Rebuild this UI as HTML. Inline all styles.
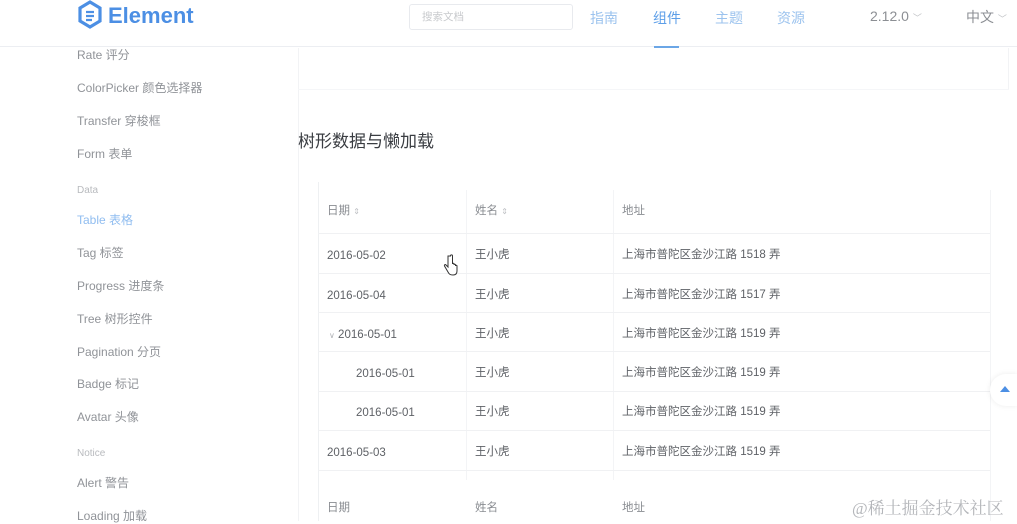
<!DOCTYPE html>
<html><head><meta charset="utf-8">
<style>
*{margin:0;padding:0;box-sizing:border-box}
body{width:1017px;height:521px;overflow:hidden;background:#fff;font-family:"Liberation Sans","Noto Sans CJK SC",sans-serif;position:relative}
.a{position:absolute;white-space:nowrap}
.hdr{position:absolute;left:0;top:0;width:1017px;height:47px;border-bottom:1px solid #eceef2;background:#fff}
.side{font-size:12px;color:#909398}
.grp{font-size:10px;color:#b8babe}
.nav{font-size:14px;color:#9cc3ee;top:8px}
.td{font-size:11.5px;color:#5e6166}
.dt{font-size:11.5px;color:#5e6166;font-family:"Liberation Sans",sans-serif}
.th{font-size:11.5px;color:#8a8d92}
.hl{position:absolute;left:318px;width:672px;height:1px;background:#f0f1f3}
.vl{position:absolute;width:1px;background:#f3f4f6}
</style></head><body>
<div class="hdr"></div>
<svg class="a" style="left:77px;top:0" width="26" height="30" viewBox="0 0 26 30"><path d="M13 2 L23 8 V21 L13 27 L3 21 V8 Z" fill="none" stroke="#4c8fe4" stroke-width="3.2"/><path d="M9 12 H17 M9 16 H17 M9 20 H15" stroke="#4c8fe4" stroke-width="2.2"/></svg>
<div class="a" style="left:108px;top:3px;font-size:22px;font-weight:bold;color:#4c8fe4">Element</div>
<div class="a" style="left:409px;top:4px;width:164px;height:26px;border:1px solid #e8eaee;border-radius:3px"></div>
<div class="a" style="left:422px;top:9px;font-size:10.5px;color:#c8cacd">搜索文档</div>
<div class="a nav" style="left:590px">指南</div>
<div class="a nav" style="left:653px;color:#5c9ee8">组件</div>
<div class="a" style="left:654px;top:46px;width:25px;height:2px;background:#6ba6e6"></div>
<div class="a nav" style="left:715px">主题</div>
<div class="a nav" style="left:777px">资源</div>
<div class="a" style="left:870px;top:8px;font-size:14px;color:#8c8f94">2.12.0 <span style="font-size:9px;color:#c0c2c6">﹀</span></div>
<div class="a" style="left:966px;top:7px;font-size:14px;color:#8c8f94">中文 <span style="font-size:9px;color:#c0c2c6">﹀</span></div>

<div class="a" style="left:298px;top:48px;width:1px;height:473px;background:#f2f3f5"></div>
<div class="a" style="left:1008px;top:48px;width:1px;height:42px;background:#f2f3f5"></div>
<div class="a" style="left:298px;top:89px;width:711px;height:1px;background:#f5f6f8"></div>

<div class="a side" style="left:77px;top:46px">Rate 评分</div>
<div class="a side" style="left:77px;top:79px">ColorPicker 颜色选择器</div>
<div class="a side" style="left:77px;top:112px">Transfer 穿梭框</div>
<div class="a side" style="left:77px;top:145px">Form 表单</div>
<div class="a grp" style="left:77px;top:185px">Data</div>
<div class="a side" style="left:77px;top:211px;color:#90bdf0">Table 表格</div>
<div class="a side" style="left:77px;top:244px">Tag 标签</div>
<div class="a side" style="left:77px;top:277px">Progress 进度条</div>
<div class="a side" style="left:77px;top:310px">Tree 树形控件</div>
<div class="a side" style="left:77px;top:343px">Pagination 分页</div>
<div class="a side" style="left:77px;top:375px">Badge 标记</div>
<div class="a side" style="left:77px;top:408px">Avatar 头像</div>
<div class="a grp" style="left:77px;top:448px">Notice</div>
<div class="a side" style="left:77px;top:474px">Alert 警告</div>
<div class="a side" style="left:77px;top:507px">Loading 加载</div>

<div class="a" style="left:298px;top:127px;font-size:17px;color:#3a3d42">树形数据与懒加载</div>

<div class="a" style="left:318px;top:182px;width:1px;height:339px;background:#eef0f2"></div>
<div class="a" style="left:990px;top:190px;width:1px;height:331px;background:#f3f4f6"></div>
<div class="vl" style="left:466px;top:190px;height:290px"></div>
<div class="vl" style="left:613px;top:190px;height:290px"></div>
<div class="hl" style="top:233px"></div>
<div class="hl" style="top:273px"></div>
<div class="hl" style="top:312px"></div>
<div class="hl" style="top:351px"></div>
<div class="hl" style="top:391px"></div>
<div class="hl" style="top:430px"></div>
<div class="hl" style="top:470px"></div>

<div class="a th" style="left:327px;top:202px">日期 <span style="font-size:8px;color:#c0c2c6">⇕</span></div>
<div class="a th" style="left:475px;top:202px">姓名 <span style="font-size:8px;color:#c0c2c6">⇕</span></div>
<div class="a th" style="left:622px;top:202px">地址</div>

<div class="a dt" style="left:327px;top:250px">2016-05-02</div><div class="a td" style="left:475px;top:246px">王小虎</div><div class="a td" style="left:622px;top:246px">上海市普陀区金沙江路 1518 弄</div>
<div class="a dt" style="left:327px;top:290px">2016-05-04</div><div class="a td" style="left:475px;top:286px">王小虎</div><div class="a td" style="left:622px;top:286px">上海市普陀区金沙江路 1517 弄</div>
<div class="a dt" style="left:329px;top:329px"><span style="font-size:8px;color:#b0b2b6">∨</span> 2016-05-01</div><div class="a td" style="left:475px;top:325px">王小虎</div><div class="a td" style="left:622px;top:325px">上海市普陀区金沙江路 1519 弄</div>
<div class="a dt" style="left:356px;top:368px">2016-05-01</div><div class="a td" style="left:475px;top:364px">王小虎</div><div class="a td" style="left:622px;top:364px">上海市普陀区金沙江路 1519 弄</div>
<div class="a dt" style="left:356px;top:407px">2016-05-01</div><div class="a td" style="left:475px;top:403px">王小虎</div><div class="a td" style="left:622px;top:403px">上海市普陀区金沙江路 1519 弄</div>
<div class="a dt" style="left:327px;top:447px">2016-05-03</div><div class="a td" style="left:475px;top:443px">王小虎</div><div class="a td" style="left:622px;top:443px">上海市普陀区金沙江路 1519 弄</div>

<div class="a th" style="left:327px;top:499px">日期</div>
<div class="a th" style="left:475px;top:499px">姓名</div>
<div class="a th" style="left:622px;top:499px">地址</div>

<svg class="a" style="left:443px;top:254px" width="16" height="22" viewBox="0 0 16 22"><path d="M5 2 v11 l-2-2 c-1-1-2 0-1.5 1 l3.5 6 c1 2 2 3 5 3 c3 0 4-2 4-4 v-5 c0-1-1.5-1-1.5 0 v-1 c0-1-1.5-1-1.5 0 v-1 c0-1-1.5-1-1.5 0 V2 c0-1.5-2-1.5-2 0 Z" fill="#fff" stroke="#333" stroke-width="1"/></svg>

<div class="a" style="left:990px;top:374px;width:27px;height:32px;border-radius:16px 0 0 16px;background:#fff;box-shadow:0 0 6px rgba(0,0,0,.08)"></div>
<svg class="a" style="left:1000px;top:386px" width="10" height="7"><path d="M5 0 L10 6 H0 Z" fill="#4c8fe4"/></svg>

<div class="a" style="left:852px;top:494px;font-size:17px;color:#b4b6ba;font-family:'Liberation Serif','Noto Serif CJK SC',serif">@稀土掘金技术社区</div>
</body></html>
